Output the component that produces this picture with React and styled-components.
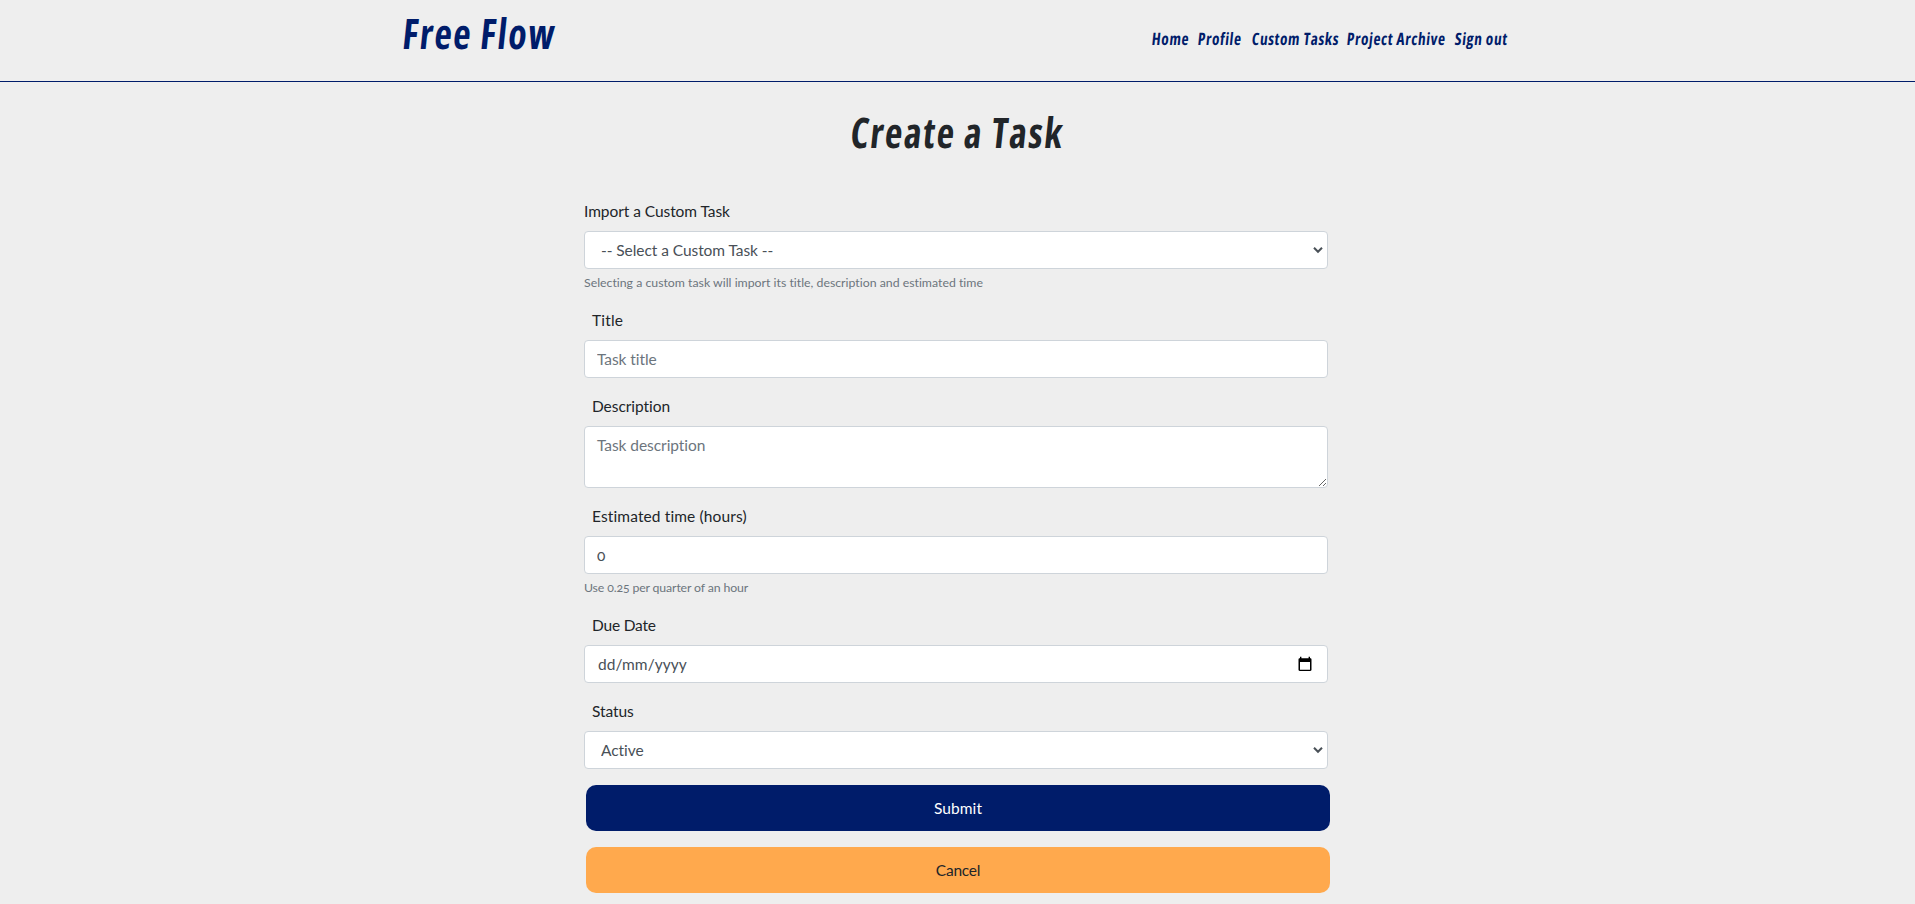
import React from "react";
import styled, { createGlobalStyle } from "styled-components";

const GlobalStyle = createGlobalStyle`
  *, *::before, *::after { box-sizing: border-box; }
  html, body { height: 100%; }
  body {
    margin: 0;
    overflow: hidden;
    background: #eeeeee;
    color: #212529;
    font-family: "Lato", "Liberation Sans", sans-serif;
    font-size: 15.5px;
    line-height: 24px;
    letter-spacing: -0.06px;
    font-variant-numeric: oldstyle-nums;
    font-variant-ligatures: no-common-ligatures;
  }
`;

const Header = styled.header`
  height: 82px;
  border-bottom: 1px solid #001c6a;
`;

const HeaderInner = styled.div`
  display: flex;
  align-items: flex-start;
  justify-content: space-between;
  width: 1110px;
  margin: 0 auto;
  padding-top: 9px;
`;

const Brand = styled.a`
  color: #001c6a;
  font: 700 42px/48px "Open Sans", sans-serif;
  font-stretch: 75%;
  letter-spacing: 1.7px;
  text-decoration: none;
  transform: skewX(-6deg) scaleX(0.9);
  transform-origin: 0 50%;
`;

const Nav = styled.nav`
  display: grid;
  grid-template-columns: 46px 54px 95px 108px 58px;
  padding-top: 18px;
`;

const NavLink = styled.a`
  color: #001c6a;
  font: 700 17px/24px "Open Sans", sans-serif;
  font-stretch: 75%;
  letter-spacing: 0.7px;
  text-decoration: none;
  white-space: nowrap;
  transform: skewX(-6deg) scaleX(0.9);
  transform-origin: 0 50%;
`;

const Title = styled.h1`
  margin: 26px 0 43px;
  font: 700 42px/48px "Open Sans", sans-serif;
  font-stretch: 75%;
  letter-spacing: 1.8px;
  text-align: center;
  transform: skewX(-6deg) scaleX(0.9);
`;

const Form = styled.form`
  display: flex;
  flex-direction: column;
  gap: 16px;
  width: 744px;
  margin-left: 584px;
`;

const Field = styled.div`
  display: flex;
  flex-direction: column;
`;

const Label = styled.label`
  margin-bottom: 8px;
  padding-left: ${({ $indent }) => ($indent ? "8px" : "0")};
  letter-spacing: ${({ $spacing }) => $spacing || "inherit"};
`;

const Help = styled.small`
  margin-top: 4px;
  color: #6c757d;
  font-size: 12.3px;
  line-height: 19px;
  letter-spacing: ${({ $tight }) => ($tight ? "-0.14px" : "0")};
`;

const Control = styled.input`
  width: 100%;
  height: 38px;
  padding: 6px 12px;
  border: 1px solid #ced4da;
  border-radius: 4px;
  background: #fff;
  color: #495057;
  font: inherit;
  font-variant-numeric: inherit;
  letter-spacing: inherit;
  outline: 0;

  &::placeholder { color: #6c757d; opacity: 1; }
`;

const TextArea = styled(Control)`
  display: block;
  height: 62px;
  resize: vertical;
`;

const SelectBox = styled.div`
  display: grid;
  align-items: center;

  > * { grid-area: 1 / 1; }
  > svg { justify-self: end; margin-right: 5px; pointer-events: none; }
`;

const SelectControl = styled(Control)`
  appearance: none;
  padding: 6px 16px;
`;

const DateBox = styled(Control)`
  display: flex;
  align-items: center;
  justify-content: space-between;
  padding: 6px 15px 6px 13px;
  letter-spacing: 0.04px;
`;

const Button = styled.button`
  width: 744px;
  height: 46px;
  margin-left: 2px;
  padding: 0;
  border: 0;
  border-radius: 10px;
  background: ${({ $secondary }) => ($secondary ? "#ffa94d" : "#001c6a")};
  color: ${({ $secondary }) => ($secondary ? "#212529" : "#fff")};
  font: inherit;
  letter-spacing: ${({ $secondary }) => ($secondary ? "-0.25px" : "0.1px")};
`;

function CalendarIcon() {
  return (
    <svg width="14" height="16" viewBox="0 0 14 16">
      <path
        fill="#000"
        fillRule="evenodd"
        d="M2 .8h1.4v1.4h7.2V.8H12v1.4h.3c.7 0 1.2.5 1.2 1.2v10.4c0 .7-.5 1.2-1.2 1.2H1.7c-.7 0-1.2-.5-1.2-1.2V3.4c0-.7.5-1.2 1.2-1.2H2zM2 6v7.8h10V6z"
      />
    </svg>
  );
}

function Select({ value }) {
  return (
    <SelectBox>
      <SelectControl as="select">
        <option>{value}</option>
      </SelectControl>
      <svg width="10" height="8" viewBox="0 0 10 8">
        <path d="M1 1.8 5 5.8 9 1.8" fill="none" stroke="#495057" strokeWidth="2" />
      </svg>
    </SelectBox>
  );
}

const links = ["Home", "Profile", "Custom Tasks", "Project Archive", "Sign out"];

export default function App() {
  return (
    <>
      <GlobalStyle />
      <Header>
        <HeaderInner>
          <Brand>Free Flow</Brand>
          <Nav>
            {links.map((name) => (
              <NavLink key={name}>{name}</NavLink>
            ))}
          </Nav>
        </HeaderInner>
      </Header>
      <main>
        <Title>Create a Task</Title>
        <Form>
          <Field>
            <Label>Import a Custom Task</Label>
            <Select value="-- Select a Custom Task --" />
            <Help>Selecting a custom task will import its title, description and estimated time</Help>
          </Field>
          <Field>
            <Label $indent $spacing="0.2px">Title</Label>
            <Control placeholder="Task title" />
          </Field>
          <Field>
            <Label $indent>Description</Label>
            <TextArea as="textarea" placeholder="Task description" />
          </Field>
          <Field>
            <Label $indent $spacing="0.12px">Estimated time (hours)</Label>
            <Control defaultValue="0" />
            <Help $tight>Use 0.25 per quarter of an hour</Help>
          </Field>
          <Field>
            <Label $indent $spacing="-0.2px">Due Date</Label>
            <DateBox as="div">
              <span>dd/mm/yyyy</span>
              <CalendarIcon />
            </DateBox>
          </Field>
          <Field>
            <Label $indent>Status</Label>
            <Select value="Active" />
          </Field>
          <Button type="button">Submit</Button>
          <Button type="button" $secondary>Cancel</Button>
        </Form>
      </main>
    </>
  );
}
